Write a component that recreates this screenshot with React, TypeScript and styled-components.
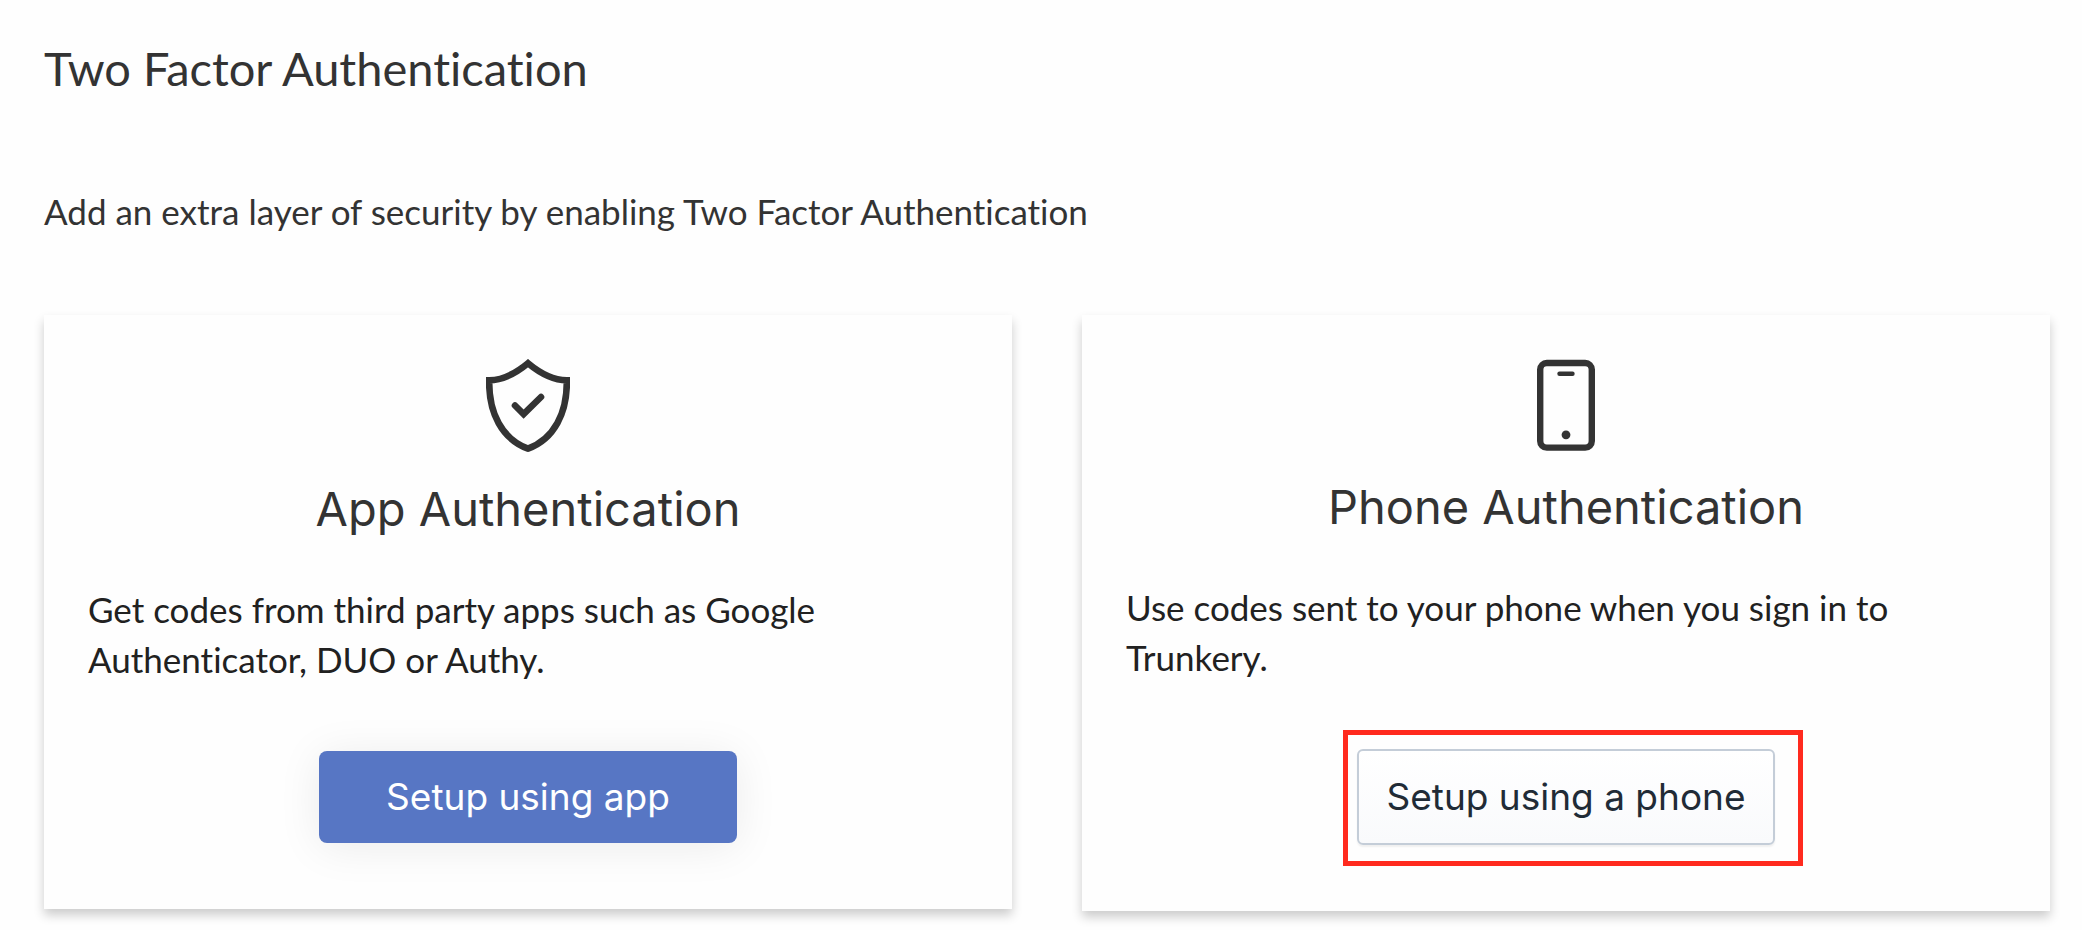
import React from "react";
import styled, { createGlobalStyle, css } from "styled-components";

const GlobalStyle = createGlobalStyle`
  body {
    margin: 0;
    background: #fefefe;
    color: #333333;
    font-family: Lato, "Liberation Sans", sans-serif;
    font-variant-ligatures: none;
  }
  *, *::before, *::after {
    box-sizing: border-box;
  }
`;

const Page = styled.main`
  padding: 40px 32px 16px 44px;
`;

const PageTitle = styled.h1`
  margin: 0 0 90px;
  font-size: 47px;
  line-height: 56px;
  font-weight: 400;
`;

const Lead = styled.p`
  margin: 0 0 79px;
  font-size: 35px;
  line-height: 50px;
`;

const Cards = styled.div`
  display: grid;
  grid-template-columns: 1fr 1fr;
  align-items: start;
  gap: 70px;
`;

const Card = styled.section`
  display: flex;
  flex-direction: column;
  align-items: center;
  padding: 44px 44px 66px;
  background: #fefefe;
  box-shadow: 0 6px 10px rgba(0, 0, 0, 0.2);

  svg {
    display: block;
  }
`;

const CardTitle = styled.h2`
  margin: 30px 0 49px;
  font-family: Inter, "Liberation Sans", sans-serif;
  font-size: 47px;
  line-height: 52px;
  font-weight: 400;
`;

const CardText = styled.p`
  align-self: stretch;
  margin: 0 0 67px;
  color: #212121;
  font-size: 35px;
  line-height: 50px;
`;

const Button = styled.button<{ $primary?: boolean }>`
  display: block;
  min-width: 418px;
  padding: 20px 24px;
  font-family: Inter, "Liberation Sans", sans-serif;
  font-size: 37px;
  line-height: 52px;
  cursor: pointer;
  ${({ $primary }) =>
    $primary
      ? css`
          border: 0;
          border-radius: 8px;
          background: #5776c4;
          color: #ffffff;
          box-shadow: 0 4px 44px rgba(0, 0, 0, 0.08);
        `
      : css`
          border: 2px solid #c4cdd8;
          border-radius: 6px;
          background: linear-gradient(#ffffff, #f9fafc);
          color: #212b36;
          box-shadow: 0 2px 2px rgba(0, 0, 0, 0.06);
        `}
`;

const Highlight = styled.div`
  position: relative;

  &::after {
    content: "";
    position: absolute;
    inset: -19px -28px -21px -14px;
    border: 5px solid #ff2a1e;
    pointer-events: none;
  }
`;

const ShieldIcon = () => (
  <svg width="84" height="94" viewBox="0 0 84 94" fill="none" stroke="#333333" aria-hidden="true">
    <path
      d="M42 4.2C32 12.5 19 21.2 3.2 21.2C2.6 54 16 80 42 89.6C68 80 81.4 54 80.8 21.2C65 21.2 52 12.5 42 4.2Z"
      strokeWidth="6.6"
    />
    <path d="M29 46.5L37.6 55L55 38" strokeWidth="6.6" strokeLinecap="round" />
  </svg>
);

const PhoneIcon = () => (
  <svg width="58" height="92" viewBox="0 0 58 92" fill="none" stroke="#333333" aria-hidden="true">
    <rect x="3.2" y="4" width="51.6" height="84.6" rx="6.6" strokeWidth="6.4" />
    <path d="M22.5 14.8H35.5" strokeWidth="4.4" strokeLinecap="round" />
    <circle cx="29" cy="75.8" r="4.4" fill="#333333" stroke="none" />
  </svg>
);

export default function App() {
  return (
    <>
      <GlobalStyle />
      <Page>
        <PageTitle>Two Factor Authentication</PageTitle>
        <Lead>Add an extra layer of security by enabling Two Factor Authentication</Lead>
        <Cards>
          <Card>
            <ShieldIcon />
            <CardTitle>App Authentication</CardTitle>
            <CardText>
              Get codes from third party apps such as Google Authenticator, DUO or Authy.
            </CardText>
            <Button type="button" $primary>
              Setup using app
            </Button>
          </Card>
          <Card>
            <PhoneIcon />
            <CardTitle>Phone Authentication</CardTitle>
            <CardText>Use codes sent to your phone when you sign in to Trunkery.</CardText>
            <Highlight>
              <Button type="button">Setup using a phone</Button>
            </Highlight>
          </Card>
        </Cards>
      </Page>
    </>
  );
}
